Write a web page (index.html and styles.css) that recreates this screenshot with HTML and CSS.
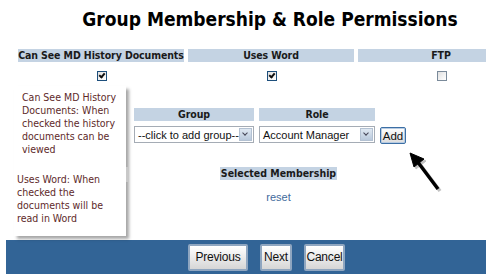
FILE: index.html
```html
<!DOCTYPE html>
<html lang="en">
<head>
    <meta charset="UTF-8">
    <title>Group Membership &amp; Role Permissions</title>
    <link rel="stylesheet" href="styles.css">
</head>
<body>

<div class="page">
    <div class="content">
        <h1>Group Membership &amp; Role Permissions</h1>

        <div class="perms">
            <div class="head">Can See MD History Documents</div>
            <div class="head">Uses Word</div>
            <div class="head">FTP</div>
            <div class="cell"><span class="cb checked"></span></div>
            <div class="cell"><span class="cb checked"></span></div>
            <div class="cell"><span class="cb"></span></div>
        </div>

        <div class="membership">
            <div class="head group-col">Group</div>
            <div class="head role-col">Role</div>
            <div></div>
            <div class="select group-col"><span class="value">--click to add group--</span><span class="drop"></span></div>
            <div class="select role-col"><span class="value">Account Manager</span><span class="drop"></span></div>
            <button class="add">Add</button>
        </div>

        <div class="selected">
            <span class="selected-title">Selected Membership</span>
            <a class="reset" href="#">reset</a>
        </div>
    </div>

    <div class="footer">
        <button class="btn prev">Previous</button>
        <button class="btn next">Next</button>
        <button class="btn cancel">Cancel</button>
    </div>

    <!-- help tooltip over the left side -->
    <div class="tooltip">
        <p class="first">Can See MD History Documents: When checked the history documents can be viewed</p>
        <p>Uses Word: When checked the documents will be read in Word</p>
    </div>
    <span class="scroll-mark"></span>

    <svg class="arrow" width="50" height="50" viewBox="0 0 50 50">
        <g transform="translate(2,2)" fill="#999" stroke="#999" opacity="0.6">
            <line x1="34" y1="41" x2="13" y2="13" stroke-width="3.5"/>
            <polygon points="6,5 20,11 10,19"/>
        </g>
        <g fill="#000" stroke="#000">
            <line x1="34" y1="41" x2="13" y2="13" stroke-width="3.5"/>
            <polygon points="6,5 20,11 10,19"/>
        </g>
    </svg>
</div>

</body>
</html>
```

FILE: styles.css
```css
body {
    margin: 0;
    background: #fff;
    font-family: "DejaVu Sans Condensed", "DejaVu Sans", sans-serif;
    color: #222;
}
.page {
    position: relative;
    width: 480px;
    height: 274px;
    margin-left: 6px;
    overflow: hidden;
}
.content {
    width: 528px;
    height: 240px;
}
h1 {
    margin: 0;
    padding-top: 8px;
    height: 41px;
    font-size: 19px;
    font-weight: bold;
    text-align: center;
    color: #000;
}
.head {
    background: #c4d3e3;
    font-size: 10.5px;
    font-weight: bold;
    text-align: center;
    height: 13px;
    line-height: 13px;
    color: #1a1a1a;
    white-space: nowrap;
    letter-spacing: -0.1px;
}
.perms {
    display: grid;
    grid-template-columns: repeat(3, 166px);
    column-gap: 4px;
    margin-left: 12px;
}
.perms .cell {
    height: 24px;
    display: flex;
    justify-content: center;
    align-items: flex-start;
    padding-top: 9px;
    box-sizing: border-box;
}
.cb {
    width: 8px;
    height: 8px;
    border: 1px solid #7a8a9a;
    background: linear-gradient(135deg, #e0e0e0, #fff);
    position: relative;
    left: 1px;
}
.cb.checked {
    border-color: #1d4f7c;
}
.cb.checked::after {
    content: "";
    position: absolute;
    left: 2px;
    top: 0px;
    width: 2px;
    height: 4px;
    border: solid #111;
    border-width: 0 2px 2px 0;
    transform: rotate(40deg);
}
.membership {
    display: grid;
    grid-template-columns: 120px 116px 31px;
    column-gap: 5px;
    row-gap: 5px;
    margin-left: 128px;
    margin-top: 22px;
}
.select {
    height: 15px;
    border: 1px solid #a5acb5;
    display: flex;
    align-items: center;
    font-size: 11px;
    font-family: "Liberation Sans", Arial, sans-serif;
    color: #111;
    background: #fff;
}
.select .value {
    flex: 1;
    padding-left: 3px;
    white-space: nowrap;
    overflow: hidden;
}
.select .drop {
    width: 13px;
    height: 13px;
    margin-right: 1px;
    background: linear-gradient(#dfe8f2, #b9c9dc);
    border: 1px solid #b3c1d2;
    box-sizing: border-box;
    position: relative;
}
.select .drop::after {
    content: "";
    position: absolute;
    left: 3px;
    top: 2px;
    width: 3px;
    height: 3px;
    border: solid #445;
    border-width: 0 1.5px 1.5px 0;
    transform: rotate(45deg);
}
.add {
    width: 26px;
    height: 17px;
    padding: 0;
    margin-top: 1px;
    border: 1px solid #3c6fa5;
    border-radius: 2px;
    background: linear-gradient(#ffffff, #dcdcdc);
    font-family: "Liberation Sans", Arial, sans-serif;
    font-size: 11.5px;
    color: #111;
    box-shadow: inset 0 0 0 1px #b7cbe2;
}
.selected {
    display: flex;
    flex-direction: column;
    align-items: center;
    margin-top: 23px;
    margin-left: 17px;
}
.selected-title {
    background: #c4d3e3;
    font-size: 10.5px;
    font-weight: bold;
    height: 13px;
    line-height: 13px;
    padding: 0 1px;
    color: #1a1a1a;
}
.reset {
    margin-top: 11px;
    font-family: "Liberation Sans", Arial, sans-serif;
    font-size: 11px;
    color: #3f6a9c;
    text-decoration: none;
}
.footer {
    height: 34px;
    background: #326496;
    display: flex;
    justify-content: center;
    align-items: center;
    gap: 12px;
    padding-left: 41px;
    box-sizing: border-box;
}
.btn {
    height: 27px;
    padding: 0;
    border: 2px solid #8fa6c0;
    border-radius: 2px;
    background: linear-gradient(#ffffff, #d6d6d6);
    font-family: "Liberation Sans", Arial, sans-serif;
    font-size: 12px;
    letter-spacing: -0.2px;
    color: #111;
}
.prev {
    width: 60px;
}
.next {
    width: 32px;
}
.cancel {
    width: 41px;
}
.tooltip {
    position: absolute;
    left: 8px;
    top: 86px;
    width: 112px;
    height: 150px;
    box-sizing: border-box;
    padding: 5px 3px 0 3px;
    background: #fff;
    box-shadow: 3px 3px 3px rgba(0, 0, 0, 0.35);
    font-size: 10.5px;
    line-height: 13px;
    color: #5e2a2a;
}
.tooltip p {
    margin: 0 0 17px 0;
}
.tooltip .first {
    margin-left: 5px;
}
.scroll-mark {
    position: absolute;
    left: 120px;
    top: 167px;
    width: 3px;
    height: 15px;
    background: #c8c8c8;
}
.arrow {
    position: absolute;
    left: 398px;
    top: 148px;
}
```
